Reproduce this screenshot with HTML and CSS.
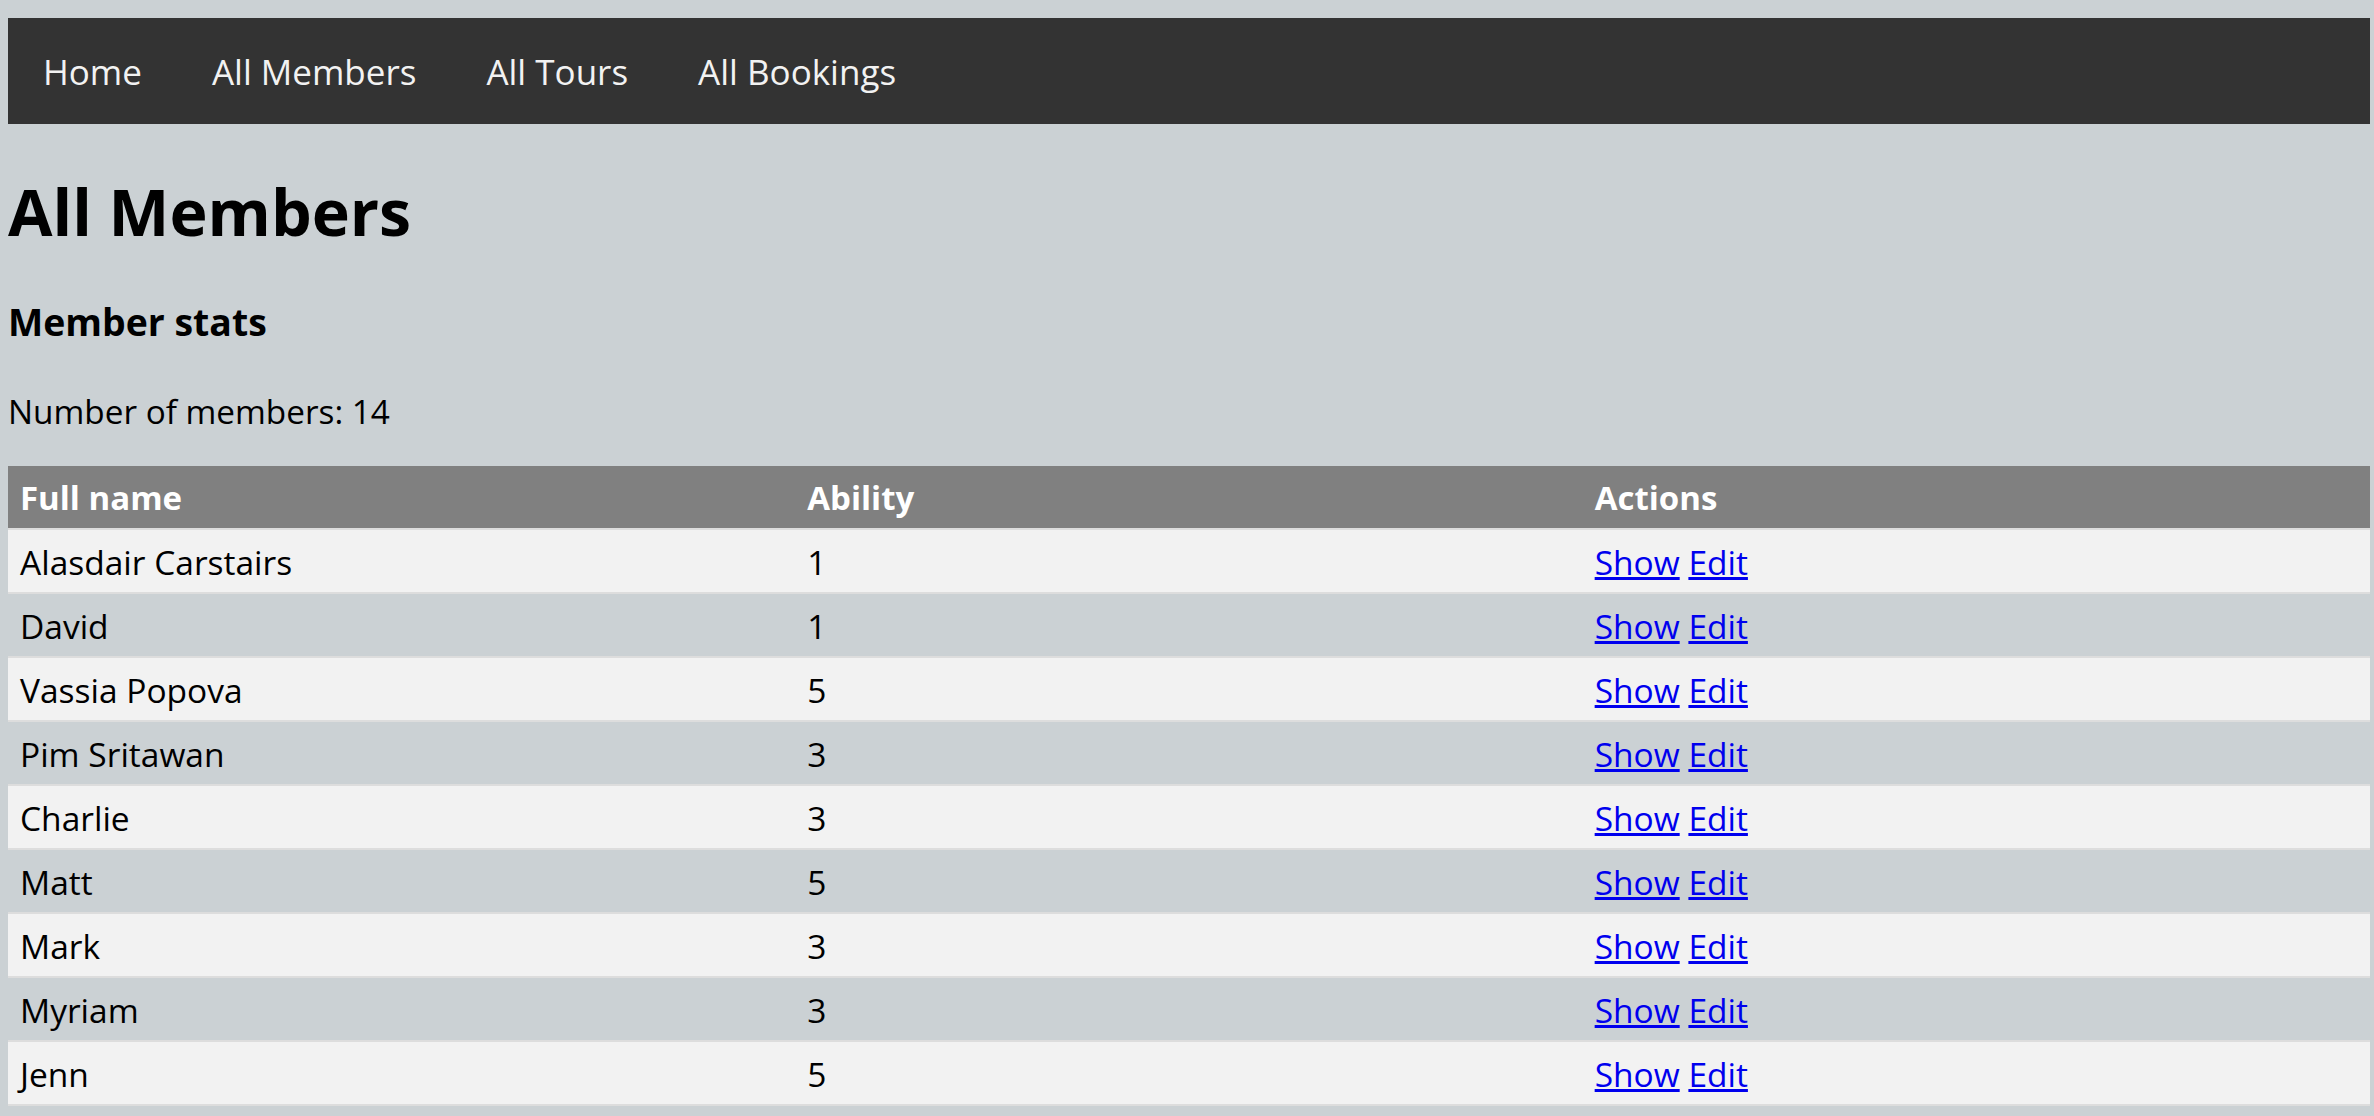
FILE: index.html
```html
<!DOCTYPE html>
<html lang="en">
<head>
<meta charset="utf-8">
<title>All Members</title>
<link rel="stylesheet" href="styles.css">
</head>
<body>
<nav>
  <ul class="navbar">
    <li><a href="#">Home</a></li>
    <li><a href="#">All Members</a></li>
    <li><a href="#">All Tours</a></li>
    <li><a href="#">All Bookings</a></li>
  </ul>
</nav>
<h1 class="page-title">All Members</h1>
<h3 class="section-title">Member stats</h3>
<p class="stat">Number of members: 14</p>
<table class="members">
  <thead>
    <tr><th>Full name</th><th>Ability</th><th>Actions</th></tr>
  </thead>
  <tbody>
    <tr><td>Alasdair Carstairs</td><td>1</td><td><a href="#">Show</a> <a href="#">Edit</a></td></tr>
    <tr><td>David</td><td>1</td><td><a href="#">Show</a> <a href="#">Edit</a></td></tr>
    <tr><td>Vassia Popova</td><td>5</td><td><a href="#">Show</a> <a href="#">Edit</a></td></tr>
    <tr><td>Pim Sritawan</td><td>3</td><td><a href="#">Show</a> <a href="#">Edit</a></td></tr>
    <tr><td>Charlie</td><td>3</td><td><a href="#">Show</a> <a href="#">Edit</a></td></tr>
    <tr><td>Matt</td><td>5</td><td><a href="#">Show</a> <a href="#">Edit</a></td></tr>
    <tr><td>Mark</td><td>3</td><td><a href="#">Show</a> <a href="#">Edit</a></td></tr>
    <tr><td>Myriam</td><td>3</td><td><a href="#">Show</a> <a href="#">Edit</a></td></tr>
    <tr><td>Jenn</td><td>5</td><td><a href="#">Show</a> <a href="#">Edit</a></td></tr>
  </tbody>
</table>
</body>
</html>
```

FILE: styles.css
```css
html, body {
  background: #cbd1d4;
}
body {
  margin: 8px 4px 8px 8px;
  font-family: "Open Sans", "Liberation Sans", sans-serif;
  font-size: 33px;
  color: #000;
}
.navbar {
  list-style: none;
  margin: 10px 0 0;
  padding: 0;
  display: flex;
  background: #333333;
}
.navbar a {
  display: block;
  padding: 2px 35px 0;
  height: 104px;
  line-height: 104px;
  font-size: 35px;
  color: #f2f2f2;
  text-decoration: none;
}
.page-title {
  margin: 47px 0 0;
  font-size: 64.5px;
  line-height: 80px;
  font-weight: 700;
}
.section-title {
  margin: 48px 0 0;
  font-size: 37.4px;
  line-height: 46px;
  font-weight: 700;
}
.stat {
  margin: 46px 0 0;
  font-size: 33.3px;
  line-height: 40px;
}
.members {
  margin-top: 35px;
  width: 100%;
  border-collapse: collapse;
  table-layout: fixed;
  font-size: 33.5px;
}
.members th,
.members td {
  text-align: left;
  padding: 12px 12px 10px;
  line-height: 40px;
  width: 33.333%;
}
.members th {
  background: #808080;
  color: #ffffff;
  font-weight: 700;
  font-size: 33px;
}
.members tr {
  border-bottom: 2px solid #dddddd;
}
.members tbody tr:nth-child(odd) {
  background: #f2f2f2;
}
.members a {
  color: #0000ee;
  text-decoration: underline;
}
```
